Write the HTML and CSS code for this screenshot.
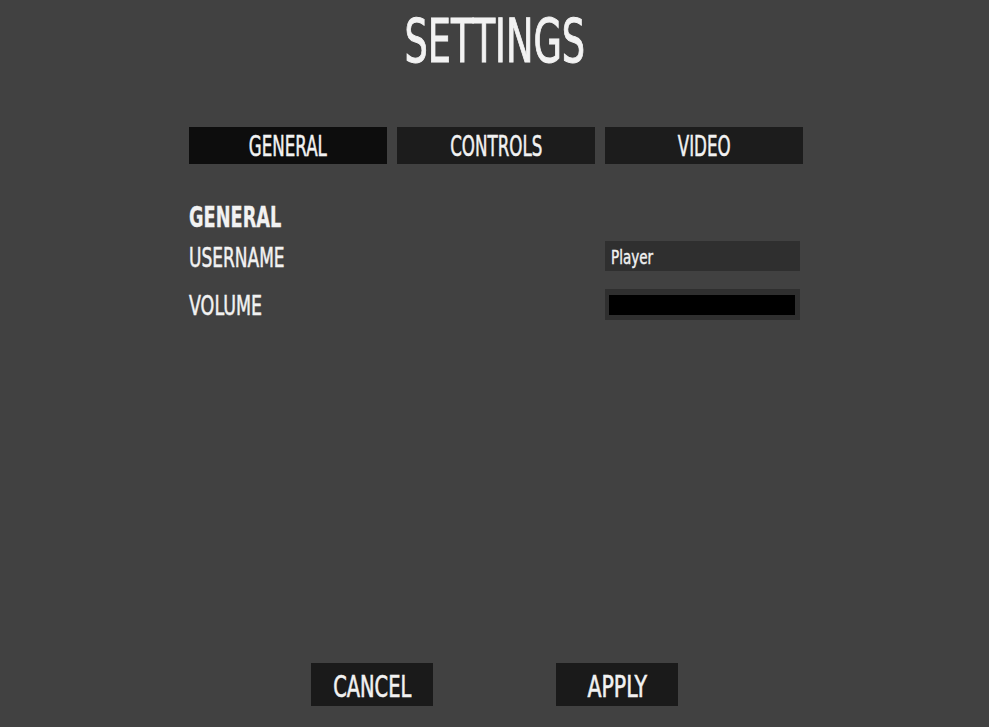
FILE: index.html
```html
<!DOCTYPE html>
<html lang="en">
<head>
<meta charset="utf-8">
<title>Settings</title>
<link rel="stylesheet" href="styles.css">
</head>
<body>
<div class="page">
  <main class="main">
    <h1 class="title"><span class="sx sx-title">SETTINGS</span></h1>
    <div class="panel">
      <nav class="tabs">
        <div class="tab tab-active"><span class="sx sx-tab">GENERAL</span></div>
        <div class="tab"><span class="sx sx-tab">CONTROLS</span></div>
        <div class="tab"><span class="sx sx-tab">VIDEO</span></div>
      </nav>
      <h2 class="section-title"><span class="sx sx-left sx-head">GENERAL</span></h2>
      <div class="row row-user">
        <div class="label"><span class="sx sx-left sx-label">USERNAME</span></div>
        <div class="input"><span class="sx sx-left sx-input">Player</span></div>
      </div>
      <div class="row row-volume">
        <div class="label"><span class="sx sx-left sx-label sx-vol">VOLUME</span></div>
        <div class="slider"><div class="slider-fill"></div></div>
      </div>
    </div>
  </main>
  <footer class="actions">
    <button class="btn"><span class="sx sx-btn1">CANCEL</span></button>
    <button class="btn"><span class="sx sx-btn2">APPLY</span></button>
  </footer>
</div>
</body>
</html>
```

FILE: styles.css
```css
html, body {
  margin: 0;
  padding: 0;
  background: #414141;
}
body {
  font-family: "DejaVu Sans Condensed", "DejaVu Sans", sans-serif;
  color: #f2f2f2;
}
.page {
  min-height: 727px;
  display: flex;
  flex-direction: column;
}
.main {
  flex: 1;
}
.sx {
  display: inline-block;
  white-space: nowrap;
  transform-origin: center;
  -webkit-text-stroke: 0.5px currentColor;
}
.sx-left { transform-origin: left center; }
.sx-title { transform: scaleX(0.68); -webkit-text-stroke: 1px currentColor; }
.sx-tab { transform: scaleX(0.675); }
.sx-head { transform: scaleX(0.68); -webkit-text-stroke: 0.3px currentColor; }
.sx-label { transform: scaleX(0.7); }
.sx-vol { transform: scaleX(0.72); }
.sx-input { transform: scaleX(0.79); -webkit-text-stroke: 0.4px currentColor; }
.sx-btn1 { transform: scaleX(0.72); -webkit-text-stroke: 0.6px currentColor; }
.sx-btn2 { transform: scaleX(0.76); -webkit-text-stroke: 0.6px currentColor; }

.title {
  margin: 6px 0 0;
  font-size: 60px;
  line-height: 70px;
  font-weight: normal;
  text-align: center;
}
.panel {
  box-sizing: border-box;
  width: 617px;
  padding-left: 3px;
  margin: 51px auto 0;
}
.tabs {
  display: grid;
  grid-template-columns: repeat(3, 1fr);
  gap: 10px;
}
.tab {
  height: 36px;
  padding-top: 1px;
  line-height: 36px;
  font-size: 27.5px;
  text-align: center;
  background: #1c1c1c;
  overflow: hidden;
}
.tab-active {
  background: #0d0d0d;
}
.section-title {
  margin: 38px 0 0;
  font-size: 29px;
  line-height: 30px;
  font-weight: bold;
}
.row {
  display: grid;
  grid-template-columns: 406px 198px;
  column-gap: 10px;
}
.row-user {
  margin-top: 9px;
  height: 30px;
}
.row-volume {
  margin-top: 18px;
  height: 31px;
}
.label {
  font-size: 27px;
  line-height: 28px;
  padding-top: 3px;
}
.input {
  box-sizing: border-box;
  width: 195px;
  height: 30px;
  background: #2f2f2f;
  padding-left: 6px;
  font-size: 19px;
  line-height: 32px;
  overflow: hidden;
}
.slider {
  box-sizing: border-box;
  width: 195px;
  height: 31px;
  background: #2f2f2f;
  padding: 6px 5px 5px 4px;
}
.slider-fill {
  height: 20px;
  background: #000;
}
.actions {
  display: flex;
  justify-content: center;
  gap: 123px;
  padding-bottom: 21px;
}
.btn {
  box-sizing: border-box;
  width: 122px;
  height: 43px;
  padding: 4px 0 0;
  margin: 0;
  border: 0;
  background: #1a1a1a;
  color: #f2f2f2;
  font-family: "DejaVu Sans Condensed", "DejaVu Sans", sans-serif;
  font-size: 30px;
  line-height: 39px;
  text-align: center;
  vertical-align: top;
}
```
